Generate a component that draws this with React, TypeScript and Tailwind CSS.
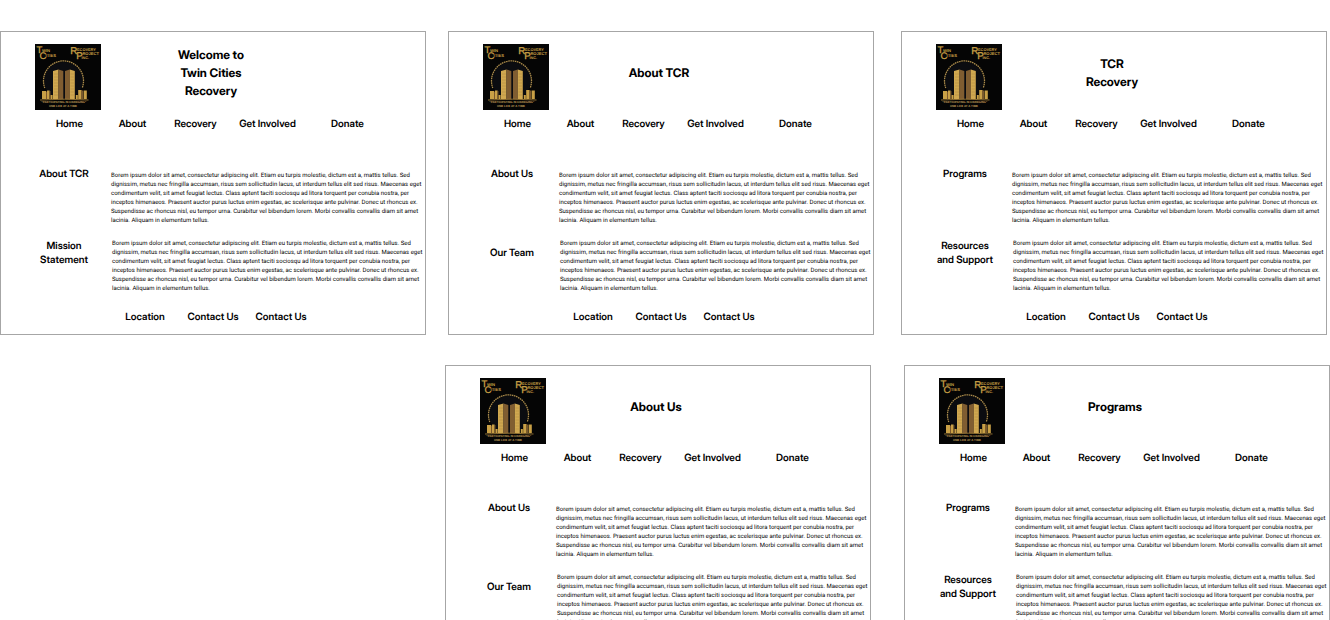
type Section = { label: string[] };
type Screen = { title: string[]; sections: Section[] };

const LOREM =
  "Borem ipsum dolor sit amet, consectetur adipiscing elit. Etiam eu turpis molestie, dictum est a, mattis tellus. Sed dignissim, metus nec fringilla accumsan, risus sem sollicitudin lacus, ut interdum tellus elit sed risus. Maecenas eget condimentum velit, sit amet feugiat lectus. Class aptent taciti sociosqu ad litora torquent per conubia nostra, per inceptos himenaeos. Praesent auctor purus luctus enim egestas, ac scelerisque ante pulvinar. Donec ut rhoncus ex. Suspendisse ac rhoncus nisl, eu tempor urna. Curabitur vel bibendum lorem. Morbi convallis convallis diam sit amet lacinia. Aliquam in elementum tellus.";

const NAV = ["Home", "About", "Recovery", "Get Involved", "Donate"];
const FOOTER = ["Location", "Contact Us", "Contact Us"];

const home: Screen = {
  title: ["Welcome to", "Twin Cities", "Recovery"],
  sections: [{ label: ["About TCR"] }, { label: ["Mission", "Statement"] }],
};
const aboutTcr: Screen = {
  title: ["About TCR"],
  sections: [{ label: ["About Us"] }, { label: ["Our Team"] }],
};
const recovery: Screen = {
  title: ["TCR", "Recovery"],
  sections: [{ label: ["Programs"] }, { label: ["Resources", "and Support"] }],
};
const aboutUs: Screen = { ...aboutTcr, title: ["About Us"] };
const programs: Screen = { ...recovery, title: ["Programs"] };

function Logo() {
  return (
    <svg
      viewBox="0 0 66 66"
      className="size-[66px] shrink-0"
      role="img"
      aria-label="Twin Cities Recovery Project Inc."
      fontFamily="Liberation Sans, sans-serif"
      fill="#c9a046"
    >
      <rect width="66" height="66" fill="#050505" />
      <circle cx="28.5" cy="37" r="19" fill="#0b0c10" />
      <text x="1.5" y="9.2" fontSize="9.5" stroke="#c9a046" strokeWidth="0.3">
        T<tspan x="7" y="7.7" fontSize="4.2" fontWeight="700" stroke="none">WIN</tspan>
        <tspan x="4.6" y="15">C</tspan>
        <tspan x="10.5" y="13.2" fontSize="4.2" fontWeight="700" stroke="none">ITIES</tspan>
      </text>
      <text x="35.3" y="9.8" fontSize="9.8" stroke="#c9a046" strokeWidth="0.3">
        R<tspan x="42" y="6.6" fontSize="3.9" fontWeight="700" stroke="none">ECOVERY</tspan>
        <tspan x="41.2" y="15">P</tspan>
        <tspan x="47.4" y="11.2" fontSize="4.1" fontWeight="700" stroke="none">ROJECT</tspan>
        <tspan x="46.5" y="15.2" fontSize="3.8" fontWeight="700" stroke="none">INC.</tspan>
      </text>
      <path
        d="M9.8 44 A20 20 0 1 1 47.2 44"
        fill="none"
        stroke="#a98a4c"
        strokeWidth="1.3"
        strokeDasharray="1.6 0.6"
      />
      <path d="M18 27 L23.5 25.5 V55 H18Z" fill="#d0a850" />
      <path d="M23.5 25.5 L28.3 27 V55 H23.5Z" fill="#805d31" />
      <path d="M30 27 L34.8 25.5 V55 H30Z" fill="#805d31" />
      <path d="M34.8 25.5 L39.8 27 V55 H34.8Z" fill="#d0a850" />
      <path
        d="M19 30h4M19 33h4M19 36h4M19 39h4M19 42h4M19 45h4M19 48h4M19 51h4M35.5 30h4M35.5 33h4M35.5 36h4M35.5 39h4M35.5 42h4M35.5 45h4M35.5 48h4M35.5 51h4"
        stroke="#b18a40"
        strokeWidth="0.5"
      />
      <path
        d="M7 47h4v8H7zM12 46.5h2.6v8.5H12zM15.4 51h2.2v4h-2.2zM43.2 46h3.4v9h-3.4zM48.6 46.5h3.2v8.5h-3.2zM40.8 51h2v4h-2z"
        fill="#c9a046"
      />
      <path d="M11 47.4h1v7.6h-1zM14.6 47h.8v8h-.8zM46.6 46.5h1.4v8.5h-1.4z" fill="#7c582d" />
      <path d="M5 56 Q29.5 54.4 53.5 56" fill="none" stroke="#b38a3e" strokeWidth="0.8" />
      <text x="28.8" y="59.3" fontSize="2.9" fontWeight="700" textAnchor="middle" fill="#c29f58">
        “PARTICIPATING IN CHANGING”
      </text>
      <text x="28" y="62.6" fontSize="2.9" fontWeight="700" textAnchor="middle" fill="#c29f58">
        ONE LIFE AT A TIME
      </text>
    </svg>
  );
}

function Lines({ lines }: { lines: string[] }) {
  return (
    <>
      {lines.map((line) => (
        <span key={line} className="block whitespace-nowrap">
          {line}
        </span>
      ))}
    </>
  );
}

function Card({ screen, className = "" }: { screen: Screen; className?: string }) {
  const [first, second] = screen.sections;
  return (
    <article className={`min-w-0 flex-1 border border-[#a6a6a6] bg-white pt-3 pb-[9px] ${className}`}>
      <header className="flex items-center pl-[34px]">
        <Logo />
        <h1 className="w-[220px] pb-2 text-center text-[12px] leading-[18px] font-bold">
          <Lines lines={screen.title} />
        </h1>
      </header>
      <nav className="mt-[6px] grid grid-cols-[63px_63px_63px_81px_79px] pl-[37px] text-center text-[10px] leading-4 font-semibold">
        {NAV.map((item) => (
          <a key={item} href="#" className="whitespace-nowrap">
            {item}
          </a>
        ))}
      </nav>
      <section className="mt-[35px] flex items-start pl-4">
        <h2 className="w-[94px] shrink-0 text-center text-[10px] leading-[14px] font-semibold">
          <Lines lines={first.label} />
        </h2>
        <p className="mt-1 min-w-0 flex-1 font-['Roboto',sans-serif] text-[6px] leading-[9px]">{LOREM}</p>
      </section>
      <section className="mt-[13px] flex items-start pl-4">
        <h2 className="flex h-[29px] w-[94px] shrink-0 flex-col justify-center text-center text-[10px] leading-[14px] font-semibold">
          <Lines lines={second.label} />
        </h2>
        <p className="mt-px min-w-0 flex-1 pl-px font-['Roboto',sans-serif] text-[6px] leading-[9px]">{LOREM}</p>
      </section>
      <footer className="mt-4 grid grid-cols-[68px_68px_68px] pl-[110px] text-center text-[10px] leading-4 font-semibold">
        {FOOTER.map((item, i) => (
          <a key={i} href="#" className="whitespace-nowrap">
            {item}
          </a>
        ))}
      </footer>
    </article>
  );
}

export default function App() {
  return (
    <main className="h-screen overflow-hidden bg-white pt-[31px] font-['Inter_Display','Inter',sans-serif] text-black [text-rendering:geometricPrecision]">
      <div className="flex pr-[3px]">
        <Card screen={home} />
        <Card screen={aboutTcr} className="ml-[22px]" />
        <Card screen={recovery} className="ml-[27px]" />
      </div>
      <div className="mt-[30px] flex">
        <div className="mr-[19px] flex-1 border border-transparent" />
        <Card screen={aboutUs} />
        <Card screen={programs} className="ml-[33px]" />
      </div>
    </main>
  );
}
